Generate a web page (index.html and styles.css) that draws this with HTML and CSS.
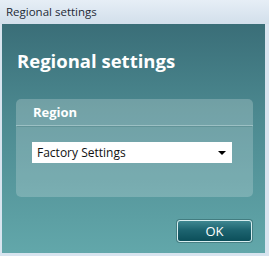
FILE: index.html
```html
<!DOCTYPE html>
<html>
<head>
	<title>Regional settings</title>
	<meta charset="utf-8">
	<link rel="stylesheet" href="styles.css">
</head>
<body>
<div class="window">
	<div class="titlebar">Regional settings</div>
	<div class="client">
		<h1 class="heading">Regional settings</h1>
		<div class="group">
			<div class="group-head">Region</div>
			<div class="group-body">
				<div class="select">
					<span>Factory Settings</span>
					<span class="arrow"></span>
				</div>
			</div>
		</div>
		<div class="actions">
			<button class="btn">OK</button>
		</div>
	</div>
</div>
</body>
</html>
```

FILE: styles.css
```css
*{
	margin: 0;
	padding: 0;
	box-sizing: border-box;
}
body{
	width: 269px;
	height: 256px;
	overflow: hidden;
	background: #dbe6f1;
	font-family: "Open Sans", "DejaVu Sans", sans-serif;
}
.window{
	display: flex;
	flex-direction: column;
	height: 256px;
	background: #d8e4ef;
}
.titlebar{
	height: 24px;
	padding: 4px 0 0 6px;
	font-size: 11.5px;
	color: #1e2a36;
	background: linear-gradient(#e6eef6, #d2dfeb);
}
.client{
	display: flex;
	flex-direction: column;
	height: 229px;
	margin: 0 4px 0 2px;
	background: linear-gradient(#3a6e78 0%, #4c8990 40%, #62a7aa 100%);
}
.heading{
	padding: 26px 0 0 15px;
	font-size: 18.5px;
	line-height: 22px;
	font-weight: bold;
	color: #fff;
}
.group{
	margin: 27px 12px 0 14px;
	border-radius: 5px;
	background: rgba(255,255,255,0.2);
	overflow: hidden;
}
.group-head{
	height: 27px;
	padding: 4px 0 0 17px;
	font-size: 13px;
	font-weight: bold;
	color: #fff;
	background: rgba(255,255,255,0.03);
	border-bottom: 1px solid rgba(230,245,245,0.35);
	box-shadow: 0 2px 0 -1px rgba(40,90,95,0.2);
}
.group-body{
	padding: 16px 0 34px 16px;
}
.select{
	display: flex;
	align-items: center;
	justify-content: space-between;
	width: 200px;
	height: 21px;
	padding: 0 6px 0 5px;
	background: #fff;
	font-size: 12px;
	color: #111;
}
.arrow{
	width: 0;
	height: 0;
	border-left: 4px solid transparent;
	border-right: 4px solid transparent;
	border-top: 4px solid #000;
	margin-top: 1px;
}
.actions{
	display: flex;
	justify-content: flex-end;
	margin-top: auto;
	padding: 0 13px 11px 0;
}
.btn{
	width: 75px;
	height: 22px;
	border: 1px solid #d8eef0;
	border-radius: 3px;
	background: linear-gradient(#3f8791 0%, #1d6470 45%, #0c4f5a 100%);
	color: #fff;
	font-family: "Open Sans", "DejaVu Sans", sans-serif;
	font-size: 13px;
	box-shadow: 0 0 0 1px rgba(30,70,75,0.4);
}
```
